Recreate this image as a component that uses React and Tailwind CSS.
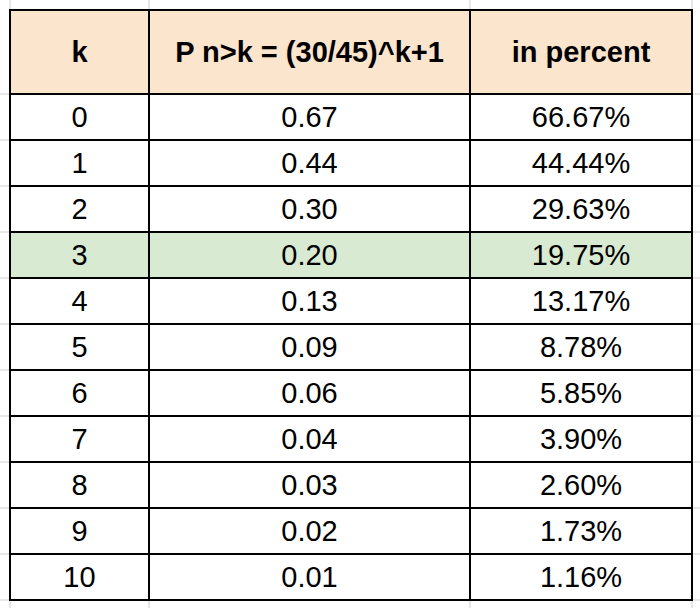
import React from 'react'

const ROWS = [
    ['0', '0.67', '66.67%'],
    ['1', '0.44', '44.44%'],
    ['2', '0.30', '29.63%'],
    ['3', '0.20', '19.75%'],
    ['4', '0.13', '13.17%'],
    ['5', '0.09', '8.78%'],
    ['6', '0.06', '5.85%'],
    ['7', '0.04', '3.90%'],
    ['8', '0.03', '2.60%'],
    ['9', '0.02', '1.73%'],
    ['10', '0.01', '1.16%'],
]

const HIGHLIGHT = 3

// margin strip above / below the table: faint sheet gridlines
function MarginRow({ h }) {
    return (
        <>
            <div className={`${h}`}></div>
            <div className={`${h} border-x-2 border-[#e6e6e6]`}></div>
            <div className={`${h} border-r-2 border-[#e6e6e6]`}></div>
            <div className={`${h} border-r-2 border-[#e6e6e6]`}></div>
            <div className={`${h}`}></div>
        </>
    )
}

export default function App() {
    return (
        <div className="w-[700px] h-[608px] bg-white overflow-hidden text-black" style={{ fontFamily: '"Liberation Sans", Arial, sans-serif' }}>
            <div className="grid grid-cols-[9px_141px_321px_222px_1fr]">
                <MarginRow h="h-[9px]" />

                {/* header */}
                <div className="h-[86px] border-y-2 border-[#e6e6e6] border-t-transparent"></div>
                <div className="h-[86px] bg-[#fce5cd] border-2 border-black flex items-center justify-center text-[29px] font-bold leading-none">k</div>
                <div className="h-[86px] bg-[#fce5cd] border-y-2 border-r-2 border-black flex items-center justify-center text-[29px] font-bold leading-none">P n&gt;k = (30/45)^k+1</div>
                <div className="h-[86px] bg-[#fce5cd] border-y-2 border-r-2 border-black flex items-center justify-center text-[29px] font-bold leading-none">in percent</div>
                <div className="h-[86px] border-y-2 border-[#e6e6e6] border-t-transparent"></div>

                {ROWS.map((r, i) => {
                    const bg = i === HIGHLIGHT ? 'bg-[#d9ead3]' : 'bg-white'
                    return (
                        <React.Fragment key={i}>
                            <div className="h-[46px] border-b-2 border-[#e6e6e6]"></div>
                            <div className={`h-[46px] ${bg} border-x-2 border-b-2 border-black flex items-center justify-center text-[29px] leading-none`}>{r[0]}</div>
                            <div className={`h-[46px] ${bg} border-r-2 border-b-2 border-black flex items-center justify-center text-[29px] leading-none`}>{r[1]}</div>
                            <div className={`h-[46px] ${bg} border-r-2 border-b-2 border-black flex items-center justify-center text-[29px] leading-none`}>{r[2]}</div>
                            <div className="h-[46px] border-b-2 border-[#e6e6e6]"></div>
                        </React.Fragment>
                    )
                })}

                <MarginRow h="h-[7px]" />
            </div>
        </div>
    )
}
